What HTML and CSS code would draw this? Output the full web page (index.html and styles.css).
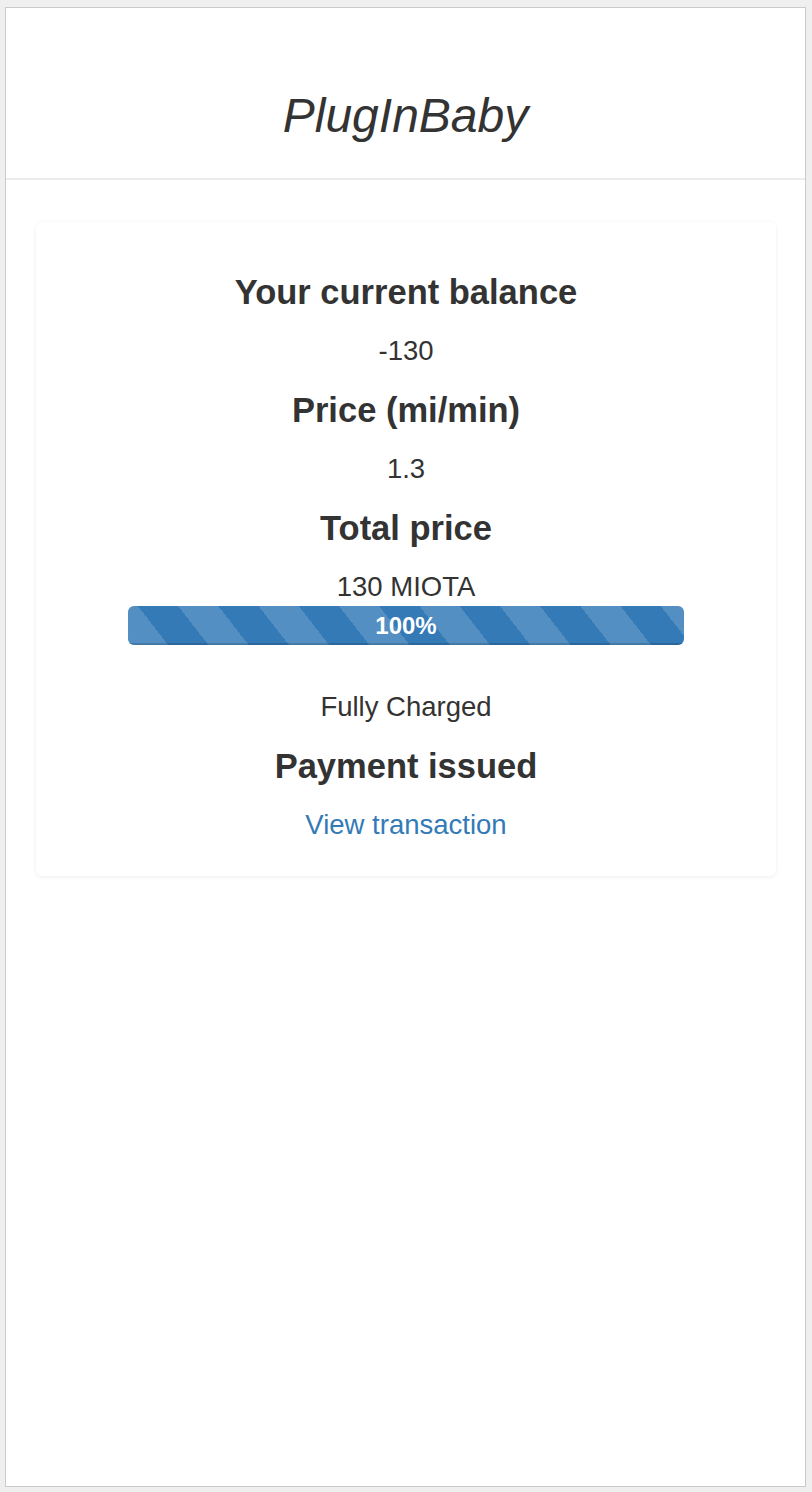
FILE: index.html
```html
<!DOCTYPE html>
<html lang="en">
<head>
<meta charset="utf-8">
<title>PlugInBaby</title>
<link rel="stylesheet" href="styles.css">
</head>
<body>
<div class="frame">
  <header class="header">
    <h1 class="brand">PlugInBaby</h1>
  </header>
  <main class="card">
    <h3 class="label">Your current balance</h3>
    <p class="value">-130</p>
    <h3 class="label">Price (mi/min)</h3>
    <p class="value">1.3</p>
    <h3 class="label">Total price</h3>
    <p class="value value-tight">130 MIOTA</p>
    <div class="progress">
      <div class="progress-bar">100%</div>
    </div>
    <p class="value">Fully Charged</p>
    <h3 class="label">Payment issued</h3>
    <p class="value value-last"><a class="link" href="#">View transaction</a></p>
  </main>
</div>
</body>
</html>
```

FILE: styles.css
```css
html, body {
  margin: 0;
  padding: 0;
}
body {
  background: #efefef;
  padding: 7px 6px 5px 5px;
  font-family: "Liberation Sans", Arial, Helvetica, sans-serif;
  color: #333333;
  box-sizing: border-box;
  height: 1492px;
}
.frame {
  background: #ffffff;
  border: 1px solid #cacaca;
  height: 1480px;
  box-sizing: border-box;
  display: flow-root;
}
.header {
  padding: 81px 0 36px;
  border-bottom: 2px solid #ececec;
  text-align: center;
}
.brand {
  margin: 0;
  font-size: 48px;
  line-height: 53px;
  font-style: italic;
  font-weight: normal;
  color: #333333;
}
.card {
  margin: 42px 29px 0 30px;
  padding: 51px 0 32px;
  border-radius: 6px;
  background: #ffffff;
  box-shadow: 0 1px 4px rgba(0, 0, 0, 0.07);
  text-align: center;
}
.label {
  margin: 0 0 20px;
  font-size: 34.5px;
  line-height: 38px;
  font-weight: bold;
  color: #333333;
}
.value {
  margin: 0 0 21px;
  font-size: 27.5px;
  line-height: 39px;
}
.value-tight {
  margin-bottom: 0;
}
.value-last {
  margin-bottom: 0;
}
.progress {
  width: 556px;
  height: 39px;
  margin: 0 auto 42px;
  border-radius: 6px;
  background: #f5f5f5;
  overflow: hidden;
}
.progress-bar {
  height: 100%;
  background-color: #337ab7;
  background-image: repeating-linear-gradient(52deg, rgba(255, 255, 255, 0.16) 0 31.7px, transparent 31.7px 63.4px);
  box-shadow: inset 0 -2px 0 rgba(0, 0, 0, 0.15);
  color: #ffffff;
  font-size: 24px;
  font-weight: bold;
  line-height: 39px;
  text-align: center;
}
.link {
  color: #337ab7;
  text-decoration: none;
}
```
